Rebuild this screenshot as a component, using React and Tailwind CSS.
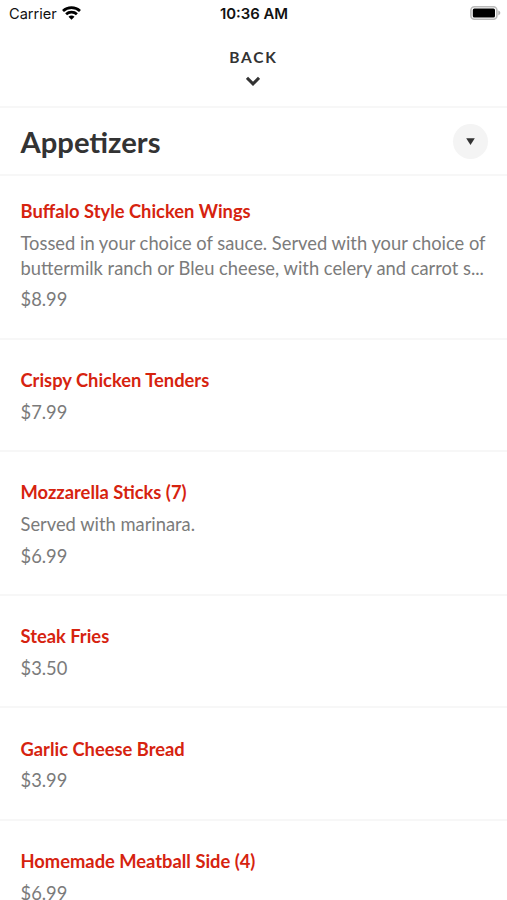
import React from 'react';

const items = [
  {
    name: 'Buffalo Style Chicken Wings',
    description: [
      'Tossed in your choice of sauce. Served with your choice of',
      'buttermilk ranch or Bleu cheese, with celery and carrot s...',
    ],
    price: '$8.99',
  },
  { name: 'Crispy Chicken Tenders', price: '$7.99' },
  { name: 'Mozzarella Sticks (7)', description: ['Served with marinara.'], price: '$6.99' },
  { name: 'Steak Fries', price: '$3.50' },
  { name: 'Garlic Cheese Bread', price: '$3.99' },
  { name: 'Homemade Meatball Side (4)', price: '$6.99' },
];

function StatusBar() {
  return (
    <div className="grid h-[28px] shrink-0 grid-cols-3 items-center pl-[9px] pr-[6px] font-['Inter',sans-serif] text-[14.6px] text-[#111]">
      <div className="flex items-center gap-[5px]">
        <span className="pt-px">Carrier</span>
        <svg className="-mt-[2px]" width="19" height="14" viewBox="0 0 19 14" fill="none" stroke="#000" strokeWidth="2.7">
          <path d="M1 5 C5.7 0.5 13.3 0.5 18 5" />
          <path d="M4.1 8.3 C7 5.5 12 5.5 14.9 8.3" />
          <path d="M6.5 10.7 C8.1 9.2 10.9 9.2 12.5 10.7 L9.5 13.8 Z" fill="#000" stroke="none" />
        </svg>
      </div>
      <span className="-ml-[2px] text-center text-[14.9px] font-semibold whitespace-nowrap">10:36 AM</span>
      <svg className="-mt-[2px] justify-self-end" width="31" height="14" viewBox="0 0 31 14">
        <rect x="0.9" y="0.8" width="26" height="12.4" rx="3.5" fill="none" stroke="#bababa" strokeWidth="1.6" />
        <rect x="2.8" y="2.6" width="22.2" height="8.8" rx="1.5" fill="#000" />
        <path d="M28.3 4.6 C31 5.6 31 8.4 28.3 9.4 Z" fill="#b0b0b0" />
      </svg>
    </div>
  );
}

function MenuItem({ item }) {
  return (
    <li className="flex flex-col gap-[7px] border-b-2 border-[#f7f7f7] px-[20.5px] pt-[28.4px] pb-[25.5px] text-[18.33px] leading-[24.7px] text-[#7b7b7b] first:pt-[23.3px] first:pb-[25.5px]">
      <h2 className="font-bold text-[#d6230f]">{item.name}</h2>
      {item.description && (
        <p className="whitespace-nowrap">
          {item.description.map((line) => (
            <span key={line} className="block">{line}</span>
          ))}
        </p>
      )}
      <p>{item.price}</p>
    </li>
  );
}

export default function App() {
  return (
    <div className="flex h-[900px] flex-col overflow-hidden bg-white font-['Lato',sans-serif]">
      <StatusBar />
      <button className="flex h-[80px] shrink-0 flex-col items-center border-b-2 border-[#f7f7f7] pt-[19px] text-[#333]">
        <span className="text-[15.5px] leading-[20px] font-bold tracking-[1.8px]">BACK</span>
        <svg className="mt-[9px] -ml-px" width="14" height="11" viewBox="0 0 14 11" fill="none" stroke="currentColor" strokeWidth="3">
          <path d="M1 1.8 L7 7.8 L13 1.8" />
        </svg>
      </button>
      <header className="flex h-[68px] shrink-0 items-center justify-between border-b-2 border-[#f7f7f7] pr-[19px] pl-[20.5px]">
        <h1 className="mt-px text-[29.2px] leading-[40px] font-bold text-[#333]">Appetizers</h1>
        <button className="flex size-[35px] items-center justify-center rounded-full bg-[#f4f4f4]">
          <svg width="9" height="7" viewBox="0 0 9 7" fill="#333">
            <path d="M0.2 0.3 H8.8 L4.5 6.9 Z" />
          </svg>
        </button>
      </header>
      <ul>
        {items.map((item) => (
          <MenuItem key={item.name} item={item} />
        ))}
      </ul>
    </div>
  );
}
